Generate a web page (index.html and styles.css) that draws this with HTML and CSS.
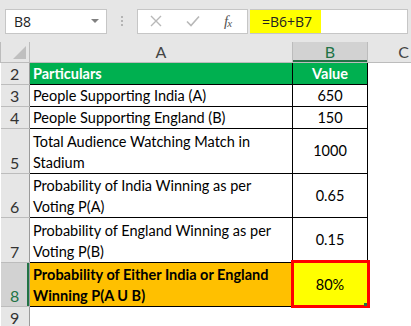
FILE: index.html
```html
<!DOCTYPE html>
<html>

<head>
    <meta http-equiv="Content-Type" content="text/html;charset=utf-8">
    <title>Probability of Either Team Winning</title>
    <link rel="stylesheet" href="styles.css">
</head>

<body>
    <div class="toolbar">
        <div class="name-box">
            <span>B8</span>
            <span class="dropdown"></span>
        </div>
        <div class="grip">
            <span></span><span></span><span></span>
        </div>
        <div class="formula-buttons">
            <svg class="btn-icon" width="12" height="12" viewBox="0 0 12 12">
                <path d="M1 1 L11 11 M11 1 L1 11" stroke="#b8b8b8" stroke-width="1.4" fill="none" />
            </svg>
            <svg class="btn-icon" width="14" height="12" viewBox="0 0 14 12">
                <path d="M1 6.5 L5 10.5 L13 1.5" stroke="#b8b8b8" stroke-width="1.6" fill="none" />
            </svg>
            <span class="fx">f<sub>x</sub></span>
        </div>
        <div class="formula-input">
            <span class="formula-text">=B6+B7</span>
        </div>
    </div>

    <table class="sheet">
        <colgroup>
            <col class="col-rowhead">
            <col class="col-a">
            <col class="col-b">
            <col>
        </colgroup>
        <tr class="head-row">
            <th class="corner"><span class="corner-mark"></span></th>
            <th>A</th>
            <th class="head-active">B</th>
            <th>C</th>
        </tr>
        <tr class="r-22">
            <th class="rownum">2</th>
            <td class="title">Particulars</td>
            <td class="title value">Value</td>
            <td class="empty"></td>
        </tr>
        <tr class="r-22">
            <th class="rownum">3</th>
            <td class="label">People Supporting India (A)</td>
            <td class="value">650</td>
            <td class="empty"></td>
        </tr>
        <tr class="r-22">
            <th class="rownum">4</th>
            <td class="label">People Supporting England (B)</td>
            <td class="value">150</td>
            <td class="empty"></td>
        </tr>
        <tr class="r-45">
            <th class="rownum">5</th>
            <td class="label">Total Audience Watching Match in<br>Stadium</td>
            <td class="value">1000</td>
            <td class="empty"></td>
        </tr>
        <tr class="r-44">
            <th class="rownum">6</th>
            <td class="label">Probability of India Winning as per<br>Voting P(A)</td>
            <td class="value">0.65</td>
            <td class="empty"></td>
        </tr>
        <tr class="r-45">
            <th class="rownum">7</th>
            <td class="label">Probability of England Winning as per<br>Voting P(B)</td>
            <td class="value">0.15</td>
            <td class="empty"></td>
        </tr>
        <tr class="r-44">
            <th class="rownum row-active">8</th>
            <td class="label result">Probability of Either India or England<br>Winning P(A U B)</td>
            <td class="value answer">80%<span class="fill-handle"></span></td>
            <td class="empty"></td>
        </tr>
        <tr class="r-20">
            <th class="rownum last-row">9</th>
            <td class="empty"></td>
            <td class="empty"></td>
            <td class="empty"></td>
        </tr>
    </table>
</body>

</html>
```

FILE: styles.css
```css
body {
    margin: 0;
    width: 411px;
    height: 326px;
    overflow: hidden;
    background: #ffffff;
    font-family: Lato, "Liberation Sans", sans-serif;
}

/* formula bar strip */
.toolbar {
    display: flex;
    align-items: center;
    height: 42px;
    padding: 0 3px 0 5px;
    box-sizing: border-box;
    background: #e6e6e6;
}

.name-box {
    display: flex;
    align-items: center;
    justify-content: space-between;
    width: 102px;
    height: 25px;
    padding: 0 7px 0 8px;
    box-sizing: border-box;
    background: #ffffff;
    border: 1px solid #c6c6c6;
    font-family: "Open Sans", sans-serif;
    font-size: 14px;
    color: #222;
}

.dropdown {
    width: 0;
    height: 0;
    border-left: 4px solid transparent;
    border-right: 4px solid transparent;
    border-top: 4px solid #808080;
}

.grip {
    display: flex;
    flex-direction: column;
    gap: 2px;
    width: 30px;
    align-items: center;
}

.grip span {
    width: 2px;
    height: 2px;
    background: #b4b4b4;
}

.formula-buttons {
    display: flex;
    align-items: center;
    width: 111px;
    height: 25px;
    box-sizing: border-box;
    background: #ffffff;
    border: 1px solid #c6c6c6;
    padding-left: 12px;
}

.btn-icon {
    margin-right: 24px;
}

.fx {
    font-family: "Liberation Serif", serif;
    font-style: italic;
    font-size: 15px;
    color: #555;
    letter-spacing: -1px;
}

.fx sub {
    font-size: 11px;
    vertical-align: -1px;
}

.formula-input {
    flex: 1;
    display: flex;
    height: 25px;
    margin-left: 2px;
    box-sizing: border-box;
    background: #ffffff;
    border: 1px solid #c6c6c6;
    border-left: none;
}

.formula-text {
    display: flex;
    align-items: center;
    padding: 0 9px 0 12px;
    background: #ffff00;
    font-family: "Open Sans", sans-serif;
    font-size: 14px;
    color: #222;
}

/* worksheet grid */
.sheet {
    border-collapse: collapse;
    table-layout: fixed;
    width: 411px;
    font-size: 14.5px;
    color: #000;
}

.col-rowhead {
    width: 29px;
}

.col-a {
    width: 263px;
}

.col-b {
    width: 75px;
}

.sheet th,
.sheet td {
    padding: 0 3px;
    line-height: 21px;
    overflow: hidden;
    white-space: nowrap;
}

.head-row {
    height: 20px;
}

.head-row th {
    background: #e6e6e6;
    font-weight: normal;
    font-size: 16px;
    line-height: 18px;
    color: #444;
    border-left: 1px solid #bcbcbc;
    border-bottom: 1px solid #bcbcbc;
    text-align: center;
}

.head-row th:last-child {
    text-align: right;
    padding-right: 2px;
}

.corner {
    position: relative;
}

.corner-mark {
    position: absolute;
    right: 3px;
    bottom: 3px;
    width: 0;
    height: 0;
    border-left: 13px solid transparent;
    border-bottom: 13px solid #bfbfbf;
}

.head-active {
    background: #d2d2d2 !important;
    color: #217346 !important;
    box-shadow: inset 0 -2px 0 #217346;
}

.r-20 {
    height: 20px;
}

.r-22 {
    height: 22px;
}

.r-44 {
    height: 44px;
}

.r-45 {
    height: 45px;
}

.rownum {
    background: #e6e6e6;
    font-weight: normal;
    font-size: 16px;
    color: #333;
    text-align: center;
    vertical-align: bottom;
    border-bottom: 1px solid #bcbcbc;
    border-right: 1px solid #9b9b9b;
}

.last-row {
    vertical-align: top;
    line-height: 20px;
    padding-top: 1px;
}

.row-active {
    background: #d2d2d2;
    color: #217346;
    box-shadow: inset -2px 0 0 #217346;
}

.label,
.value,
.title {
    border: 1px solid #000;
}

.label {
    vertical-align: bottom;
    white-space: normal;
}

.value {
    text-align: center;
    vertical-align: middle;
}

.title {
    background: #00b050;
    color: #ffffff;
    font-weight: bold;
}

.result {
    background: #ffc000;
    font-weight: bold;
}

.answer {
    position: relative;
    background: #ffff00;
    outline: 3px solid #ff0000;
    outline-offset: -1px;
}

.fill-handle {
    position: absolute;
    right: 0;
    bottom: 0;
    width: 3px;
    height: 3px;
    background: #217346;
}

.empty {
    border: none;
}
```
